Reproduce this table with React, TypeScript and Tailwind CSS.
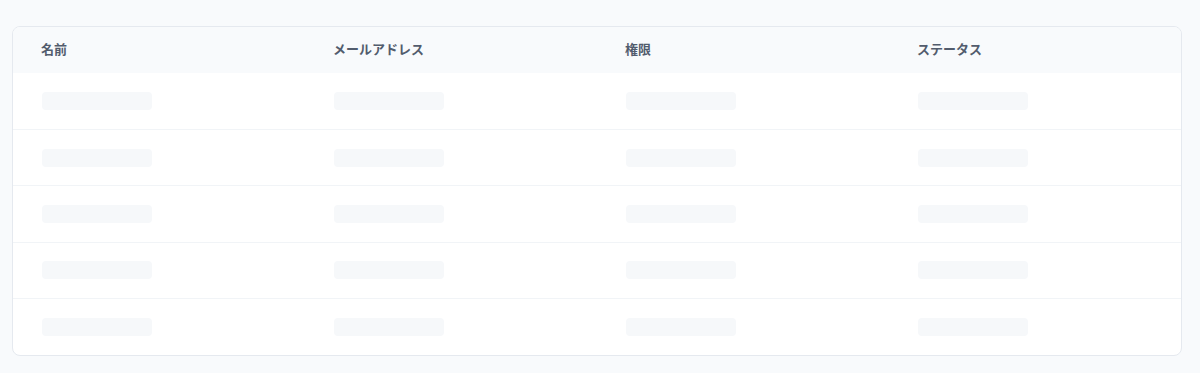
const columns = ["名前", "メールアドレス", "権限", "ステータス"];
const rows = [0, 1, 2, 3, 4];

export default function App() {
	return (
		<div
			className="min-h-[373px] bg-[#f8fafc] pt-[26px] pl-3 pr-[18px]"
			style={{ fontFamily: '"Noto Sans", "Noto Sans CJK JP", sans-serif' }}
		>
			<div className="overflow-hidden rounded-lg border border-[#e5e9ef] bg-white">
				<table className="w-full table-fixed border-collapse">
					<thead>
						<tr className="h-[46px] bg-[#f8fafc]">
							{columns.map((col) => (
								<th
									key={col}
									className="pl-7 text-left text-[13px] font-bold text-[#525c6d]"
								>
									{col}
								</th>
							))}
						</tr>
					</thead>
					<tbody>
						{rows.map((r) => (
							<tr
								key={r}
								className="h-[56.4px] border-b border-[#f1f4f7] last:border-b-0"
							>
								{columns.map((col) => (
									<td key={col} className="pl-7 align-middle">
										<div className="ml-px h-[18px] w-[110px] rounded-sm bg-[#f6f8fa]" />
									</td>
								))}
							</tr>
						))}
					</tbody>
				</table>
			</div>
		</div>
	);
}
